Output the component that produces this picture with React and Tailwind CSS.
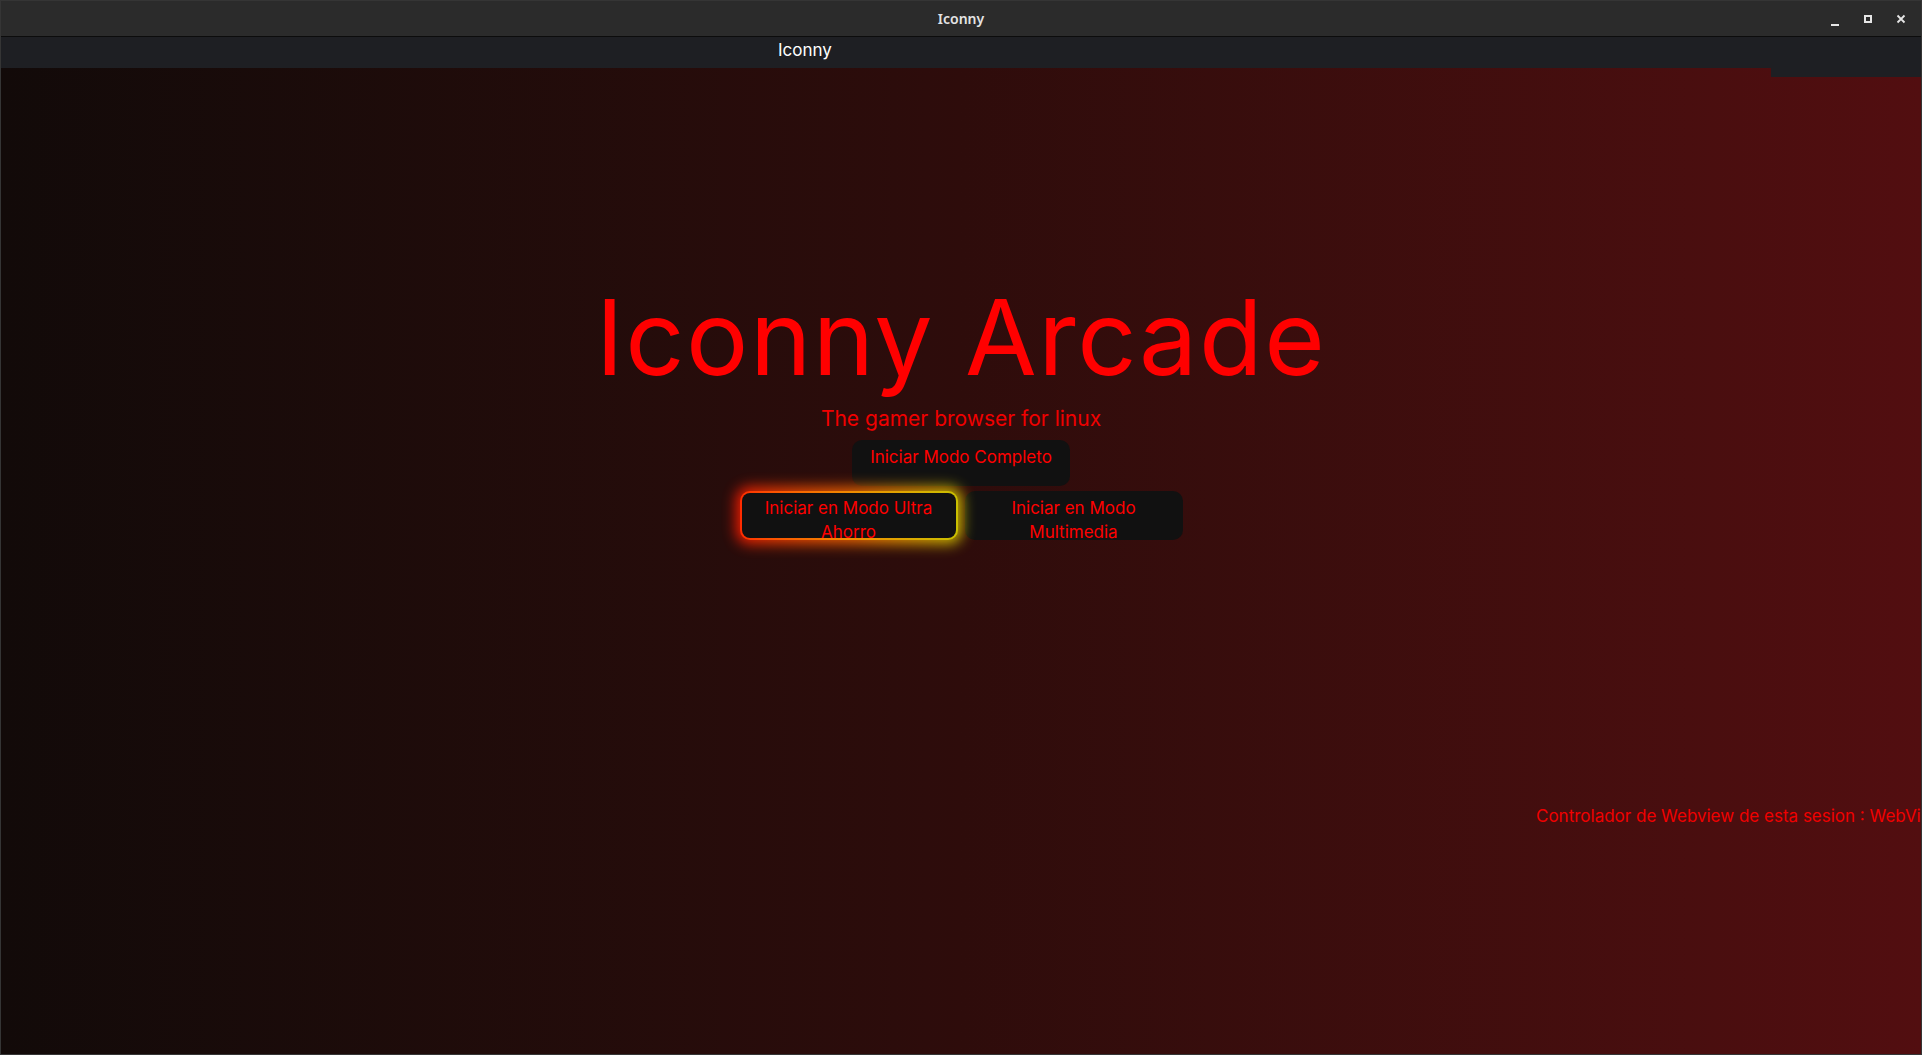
import React from 'react';

const WindowControls = () => (
  <div className="flex items-center justify-end gap-[23px] pr-[15px] text-[#e6e6e6]">
    {/* minimize */}
    <svg width="10" height="10" viewBox="0 0 10 10" className="mt-[6px]">
      <rect x="1" y="7" width="8" height="2" fill="currentColor" />
    </svg>
    {/* maximize */}
    <svg width="10" height="10" viewBox="0 0 10 10">
      <rect x="2" y="2" width="6" height="6" fill="none" stroke="currentColor" strokeWidth="2" />
    </svg>
    {/* close */}
    <svg width="10" height="10" viewBox="0 0 10 10">
      <path d="M1.5 1.5l7 7M8.5 1.5l-7 7" stroke="currentColor" strokeWidth="1.8" />
    </svg>
  </div>
);

const ModeButton = ({ children, tall }) => (
  <button
    className={`w-[218px] ${tall ? 'h-[49px]' : 'h-[46px]'} bg-[#111111] rounded-[10px] pt-[5px] px-3 text-[17px] leading-6 text-[#ff0000] text-center flex flex-col items-center justify-start`}
  >
    {children}
  </button>
);

const GlowButton = ({ children }) => (
  <div className="relative w-[218px] h-[49px]">
    {/* glow */}
    <div className="absolute -inset-[4px] rounded-[13px] bg-gradient-to-r from-[#ff1200] via-[#ff6a00] to-[#d6cf00] blur-[7px] opacity-90" />
    <div className="relative h-full rounded-[10px] p-[2px] bg-gradient-to-r from-[#ff2a00] via-[#f08a00] to-[#c9c000]">
      <div className="h-full rounded-[8px] bg-[#111111] pt-[3px] px-3 text-[17px] leading-6 text-[#ff0000] text-center">
        {children}
      </div>
    </div>
  </div>
);

export default function App() {
  return (
    <div className="w-[1922px] h-[1055px] flex flex-col overflow-hidden border border-[#353535] bg-[#2b2b2b] font-['Inter',sans-serif]">
      {/* Title bar */}
      <div className="h-[36px] shrink-0 grid grid-cols-3 items-center bg-[#2b2b2b] border-b border-[#0c0c0c]">
        <div />
        <div className="text-center text-[14px] font-semibold text-[#e4e4e4] font-['Noto_Sans',sans-serif]">Iconny</div>
        <WindowControls />
      </div>

      {/* App header */}
      <div className="h-[31px] shrink-0 flex items-center bg-[#1e1f23] pl-[777px] pb-[3px]">
        <span className="text-[17px] text-white">Iconny</span>
      </div>

      {/* Content */}
      <div className="relative flex-1 flex flex-col items-center bg-gradient-to-r from-[#120a09] via-[#2e0c0b] to-[#520e10] pt-[217px]">
        <div className="absolute top-0 right-0 w-[150px] h-[9px] bg-[#1e1f23]" />

        <h1 className="text-[104px] leading-none text-[#ff0000] tracking-[1.5px]">Iconny Arcade</h1>
        <p className="mt-[16px] text-[21px] leading-[28px] text-[#f00000]">The gamer browser for linux</p>

        <div className="mt-[7px]">
          <ModeButton>Iniciar Modo Completo</ModeButton>
        </div>

        <div className="mt-[5px] flex gap-[7px]">
          <GlowButton>Iniciar en Modo Ultra Ahorro</GlowButton>
          <ModeButton tall>Iniciar en Modo Multimedia</ModeButton>
        </div>

        <div className="self-stretch mt-[264px] pl-[1535px] whitespace-nowrap overflow-hidden text-[17px] leading-6 text-[#f00000]">
          Controlador de Webview de esta sesion : WebView2
        </div>
      </div>
    </div>
  );
}
